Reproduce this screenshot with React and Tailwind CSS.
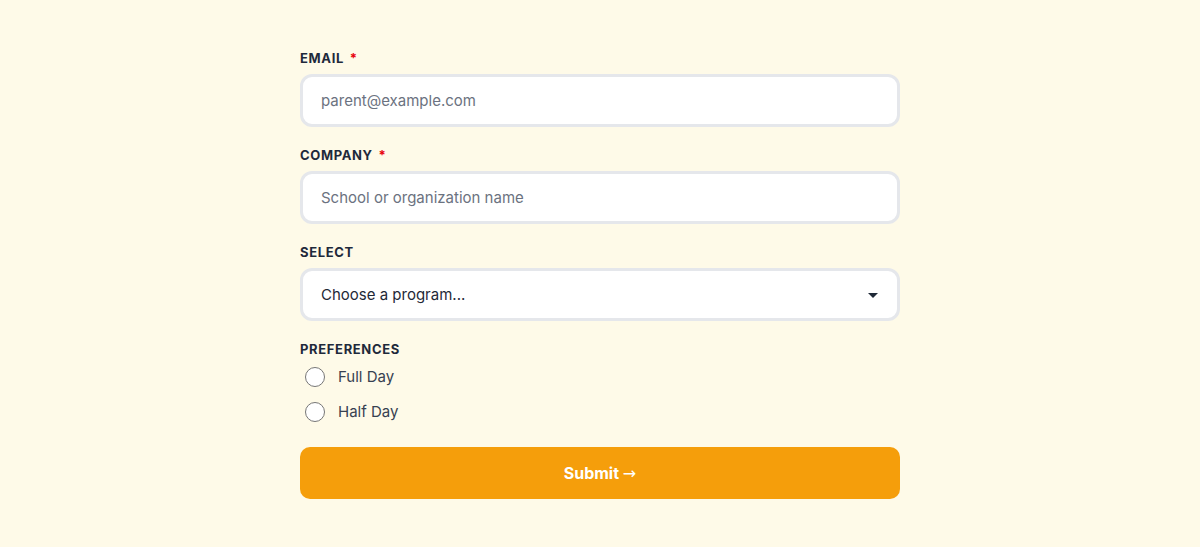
export default function App() {
  const font = { fontFamily: "Inter, 'Liberation Sans', sans-serif" };

  return (
    <div
      className="min-h-[547px] w-full bg-[#fefae8] flex justify-center pt-[50px]"
      style={font}
    >
      <form className="w-[600px] flex flex-col">
        {/* Email */}
        <label className="text-[13px] leading-4 font-bold tracking-[0.05em] uppercase text-[#1e293b]">
          Email <span className="text-red-600 ml-[2px]">*</span>
        </label>
        <div className="mt-2 h-[53px] rounded-xl border-[3px] border-[#e5e7eb] bg-white flex items-center px-[18px] pt-[1px]">
          <span className="text-[15px] text-[#6b7280]">parent@example.com</span>
        </div>

        {/* Company */}
        <label className="mt-5 text-[13px] leading-4 font-bold tracking-[0.05em] uppercase text-[#1e293b]">
          Company <span className="text-red-600 ml-[2px]">*</span>
        </label>
        <div className="mt-2 h-[53px] rounded-xl border-[3px] border-[#e5e7eb] bg-white flex items-center px-[18px] pt-[1px]">
          <span className="text-[15px] text-[#6b7280]">School or organization name</span>
        </div>

        {/* Select */}
        <label className="mt-5 text-[13px] leading-4 font-bold tracking-[0.05em] uppercase text-[#1e293b]">
          Select
        </label>
        <div className="mt-2 h-[53px] rounded-xl border-[3px] border-[#e5e7eb] bg-white flex items-center justify-between pl-[18px] pr-[19px] pt-[1px]">
          <span className="text-[15px] text-[#1f2937]">Choose a program...</span>
          <svg width="10" height="5" viewBox="0 0 10 5">
            <path d="M0 0 L10 0 L5 5 Z" fill="#1f2937" />
          </svg>
        </div>

        {/* Preferences */}
        <label className="mt-5 text-[13px] leading-4 font-bold tracking-[0.05em] uppercase text-[#1e293b]">
          Preferences
        </label>
        <div className="mt-[10px] flex flex-col gap-[15px]">
          {["Full Day", "Half Day"].map((opt) => (
            <div key={opt} className="flex items-center h-5">
              <span className="ml-[5px] w-5 h-5 rounded-full border border-[#767676] bg-white" />
              <span className="ml-[13px] text-[15px] text-[#374151]">{opt}</span>
            </div>
          ))}
        </div>

        {/* Submit */}
        <button
          type="button"
          className="mt-[25px] h-[52px] w-full rounded-[10px] bg-[#f59e0b] text-white text-base font-bold"
        >
          Submit{" "}
          <span className="font-normal" style={{ fontFamily: "'DejaVu Sans', sans-serif" }}>
            →
          </span>
        </button>
      </form>
    </div>
  );
}
